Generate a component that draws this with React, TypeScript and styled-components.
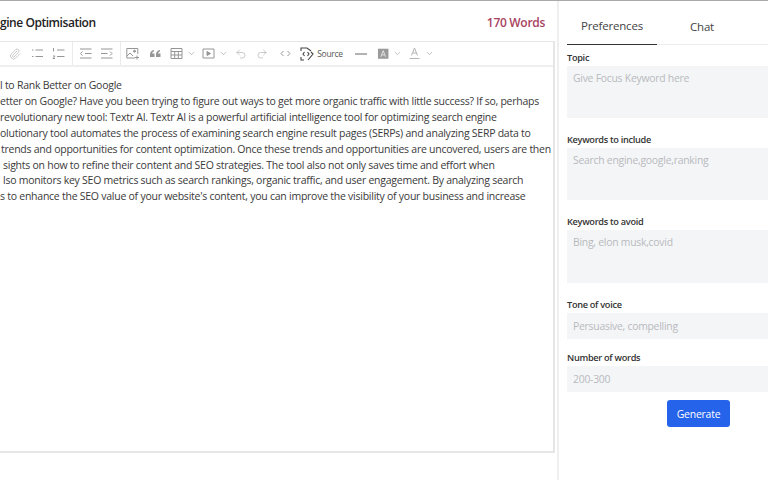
import * as React from "react";
import styled, { createGlobalStyle } from "styled-components";
import { ChevronDown, Paperclip, Redo2, Undo2 } from "lucide-react";

const GlobalStyle = createGlobalStyle`
  html, body {
    background: white;
    height: 100%;
    margin: 0;
    overflow: hidden;
  }

  body {
    color: #333;
    font-family: "Open Sans", "Noto Sans", sans-serif;
  }
`;

const Page = styled.div`
  border-top: 1px solid #a9a9a9;
  display: grid;
  grid-template-columns: 557px 1fr;
  height: 479px;
  width: 768px;
`;

const EditorColumn = styled.div`
  display: flex;
  flex-direction: column;
  height: 452px;
`;

const Header = styled.div`
  align-items: center;
  box-sizing: border-box;
  display: flex;
  height: 40px;
  justify-content: space-between;
  padding: 3px 12px 0 0;
`;

const Title = styled.h1`
  color: #222;
  font-size: 12px;
  font-weight: 600;
  letter-spacing: -0.45px;
  margin: 0;
`;

const WordCount = styled.span`
  color: #a8435f;
  font-size: 12px;
  font-weight: 600;
  letter-spacing: -0.3px;
`;

const Editor = styled.div`
  border: solid #e6e6e6;
  border-width: 1px 2px 2px 0;
  display: flex;
  flex: 1;
  flex-direction: column;
  margin-right: 2px;
`;

const Toolbar = styled.div`
  align-items: center;
  border-bottom: 2px solid #efefef;
  box-sizing: border-box;
  color: #969696;
  display: flex;
  height: 25px;
  padding-left: 4px;
`;

const ToolButton = styled.span<{ $width: number }>`
  align-items: center;
  display: flex;
  flex: none;
  gap: 4px;
  justify-content: center;
  width: ${(p) => p.$width}px;
`;

const SourceButton = styled(ToolButton)`
  gap: 3px;
`;

const Separator = styled.span<{ $margin?: number }>`
  background: #ebebeb;
  flex: none;
  height: 23px;
  margin: 0 ${(p) => p.$margin ?? 0}px;
  width: 1px;
`;

const SourceLabel = styled.span`
  color: #555;
  font-size: 8.5px;
  letter-spacing: -0.3px;
`;

const Body = styled.div`
  color: #3a3a3a;
  flex: 1;
  font-size: 10.5px;
  letter-spacing: -0.25px;
  line-height: 15.9px;
  overflow: hidden;
  padding-top: 11px;
`;

const Line = styled.div<{ $indent?: number }>`
  padding-left: ${(p) => p.$indent ?? 0}px;
  white-space: nowrap;
`;

const Side = styled.aside`
  border-left: 2px solid #efefef;
  box-sizing: border-box;
  display: flex;
  flex-direction: column;
  padding-left: 8px;
`;

const Tabs = styled.div`
  border-bottom: 1px solid #ececec;
  box-sizing: border-box;
  display: flex;
  height: 44px;
  margin-bottom: 6px;
`;

const Tab = styled.div<{ $active?: boolean; $width: number }>`
  align-items: center;
  border-bottom: ${(p) => (p.$active ? "1.5px solid #333" : "none")};
  box-sizing: border-box;
  color: #444;
  display: flex;
  font-size: 11.5px;
  height: 44px;
  justify-content: center;
  letter-spacing: -0.2px;
  padding-top: 6px;
  width: ${(p) => p.$width}px;
`;

const Field = styled.div<{ $gap: number }>`
  display: flex;
  flex-direction: column;
  gap: 2px;
  margin-bottom: ${(p) => p.$gap}px;
`;

const Label = styled.label`
  color: #333;
  font-size: 9.2px;
  font-weight: 600;
  letter-spacing: -0.3px;
  line-height: 13px;
`;

const Input = styled.div<{ $height: number }>`
  background: #f4f5f7;
  box-sizing: border-box;
  color: #b8babe;
  font-size: 10.4px;
  height: ${(p) => p.$height}px;
  letter-spacing: -0.25px;
  line-height: 14px;
  padding: ${(p) => (p.$height > 30 ? 5 : 6)}px 6px;
`;

const Actions = styled.div`
  display: flex;
  justify-content: flex-end;
  padding: 1px 38px 0 0;
`;

const GenerateButton = styled.button`
  background: #2563eb;
  border: none;
  border-radius: 3px;
  color: white;
  font-family: inherit;
  font-size: 10.4px;
  height: 27px;
  letter-spacing: -0.2px;
  padding: 0;
  width: 63px;
`;

const lines: { text: string; indent?: number }[] = [
  { text: "l to Rank Better on Google" },
  { text: "etter on Google? Have you been trying to figure out ways to get more organic traffic with little success? If so, perhaps" },
  { text: "revolutionary new tool: Textr AI. Textr AI is a powerful artificial intelligence tool for optimizing search engine" },
  { text: "olutionary tool automates the process of examining search engine result pages (SERPs) and analyzing SERP data to" },
  { text: "trends and opportunities for content optimization. Once these trends and opportunities are uncovered, users are then", indent: 1 },
  { text: "sights on how to refine their content and SEO strategies. The tool also not only saves time and effort when", indent: 3 },
  { text: "lso monitors key SEO metrics such as search rankings, organic traffic, and user engagement. By analyzing search", indent: 3 },
  { text: "s to enhance the SEO value of your website's content, you can improve the visibility of your business and increase" },
];

const Icon = ({ children }: { children: React.ReactNode }) => (
  <svg width={13} height={13} viewBox="0 0 13 13" fill="none" stroke="currentColor" strokeWidth={1}>
    {children}
  </svg>
);

const Chevron = () => <ChevronDown size={9} strokeWidth={1.6} />;

const BulletList = () => (
  <Icon>
    <path d="M1 3h1.500M1 9.500h1.500M4.500 3h7.500M4.500 9.500h7.500" />
  </Icon>
);

const NumberList = () => (
  <Icon>
    <path d="M1.500 1v3.500M1 9h2L1 11.500h2M5 3h7.500M5 9.500h7.500" />
  </Icon>
);

const Outdent = () => (
  <Icon>
    <path d="M1 2h11.500M6 6.500h6.500M1 11h11.500M3.500 4.500L1.500 6.500l2 2" />
  </Icon>
);

const Indent = () => (
  <Icon>
    <path d="M1 2h11.500M1 6.500h6.500M1 11h11.500M10 4.500l2 2-2 2" />
  </Icon>
);

const ImageAdd = () => (
  <Icon>
    <path d="M9 11H.8V1.500h11V7" />
    <path d="M1 9l3-3 3 3" />
    <circle cx="8.500" cy="4.200" r="1" fill="currentColor" />
    <path d="M11 8.500v4M9 10.500h4" />
  </Icon>
);

const QuoteIcon = () => (
  <Icon>
    <path
      d="M1 10V7.500C1 5 2.500 3.500 5 3v1.500C3.800 4.800 3.200 5.500 3.200 6.500H5.500V10zM7 10V7.500C7 5 8.500 3.500 11 3v1.500C9.800 4.800 9.200 5.500 9.200 6.500h2.300V10z"
      fill="currentColor"
      stroke="none"
    />
  </Icon>
);

const TableIcon = () => (
  <Icon>
    <path d="M1 1.500h11v10H1zM1 4.500h11M1 8h11M4.700 4.500v7M8.300 4.500v7" />
  </Icon>
);

const MediaIcon = () => (
  <Icon>
    <path d="M1 2h11v9H1z" />
    <path d="M5 4.500l3.500 2-3.500 2z" fill="currentColor" />
  </Icon>
);

const CodeIcon = () => (
  <Icon>
    <path d="M4.500 4L2 6.500 4.500 9M8.500 4L11 6.500 8.500 9" />
  </Icon>
);

const SourceIcon = () => (
  <svg width={14} height={14} viewBox="0 0 14 14" fill="none" stroke="#444" strokeWidth={1.1}>
    <path d="M1 4V1h6l4 3M1 10v3h3M8 13l5-6-2-2" />
    <path d="M4.500 5L3 7l1.500 2M7.500 5L9 7l-1.500 2" />
  </svg>
);

const HighlightIcon = () => (
  <Icon>
    <rect x="1" y="1.500" width="11" height="10.500" fill="#9a9a9a" stroke="none" />
    <path d="M4 10l2.500-6.500L9 10M5 8h3" stroke="#e4e4e4" />
  </Icon>
);

const FontColorIcon = () => (
  <Icon>
    <path d="M3.500 8.500L6.500 1l3 7.500M4.500 6h4M1.500 11.500h10" stroke="#b4b4b4" />
  </Icon>
);

const App = () => (
  <>
    <GlobalStyle />
    <Page>
      <EditorColumn>
        <Header>
          <Title>gine Optimisation</Title>
          <WordCount>170 Words</WordCount>
        </Header>
        <Editor>
          <Toolbar>
            <ToolButton $width={22}><Paperclip size={12} strokeWidth={1} /></ToolButton>
            <ToolButton $width={23}><BulletList /></ToolButton>
            <ToolButton $width={18}><NumberList /></ToolButton>
            <Separator $margin={5} />
            <ToolButton $width={15}><Outdent /></ToolButton>
            <ToolButton $width={27}><Indent /></ToolButton>
            <Separator />
            <ToolButton $width={22}><ImageAdd /></ToolButton>
            <ToolButton $width={24}><QuoteIcon /></ToolButton>
            <ToolButton $width={32}><TableIcon /><Chevron /></ToolButton>
            <ToolButton $width={31}><MediaIcon /><Chevron /></ToolButton>
            <ToolButton $width={22}><Undo2 size={12} strokeWidth={1} /></ToolButton>
            <ToolButton $width={20}><Redo2 size={12} strokeWidth={1} /></ToolButton>
            <ToolButton $width={26}><CodeIcon /></ToolButton>
            <SourceButton $width={47}><SourceIcon /><SourceLabel>Source</SourceLabel></SourceButton>
            <ToolButton $width={32}>
              <svg width={12} height={2} viewBox="0 0 12 2"><path d="M0 1h12" stroke="#808080" strokeWidth={1.2} /></svg>
            </ToolButton>
            <ToolButton $width={25}><HighlightIcon /><Chevron /></ToolButton>
            <ToolButton $width={37}><FontColorIcon /><Chevron /></ToolButton>
          </Toolbar>
          <Body>
            {lines.map((line) => (
              <Line key={line.text} $indent={line.indent}>{line.text}</Line>
            ))}
          </Body>
        </Editor>
      </EditorColumn>
      <Side>
        <Tabs>
          <Tab $active $width={90}>Preferences</Tab>
          <Tab $width={90}>Chat</Tab>
        </Tabs>
        <Field $gap={15}>
          <Label>Topic</Label>
          <Input $height={52}>Give Focus Keyword here</Input>
        </Field>
        <Field $gap={15}>
          <Label>Keywords to include</Label>
          <Input $height={52}>Search engine,google,ranking</Input>
        </Field>
        <Field $gap={15}>
          <Label>Keywords to avoid</Label>
          <Input $height={53}>Bing, elon musk,covid</Input>
        </Field>
        <Field $gap={12}>
          <Label>Tone of voice</Label>
          <Input $height={26}>Persuasive, compelling</Input>
        </Field>
        <Field $gap={7}>
          <Label>Number of words</Label>
          <Input $height={26}>200-300</Input>
        </Field>
        <Actions>
          <GenerateButton>Generate</GenerateButton>
        </Actions>
      </Side>
    </Page>
  </>
);

export default App;
